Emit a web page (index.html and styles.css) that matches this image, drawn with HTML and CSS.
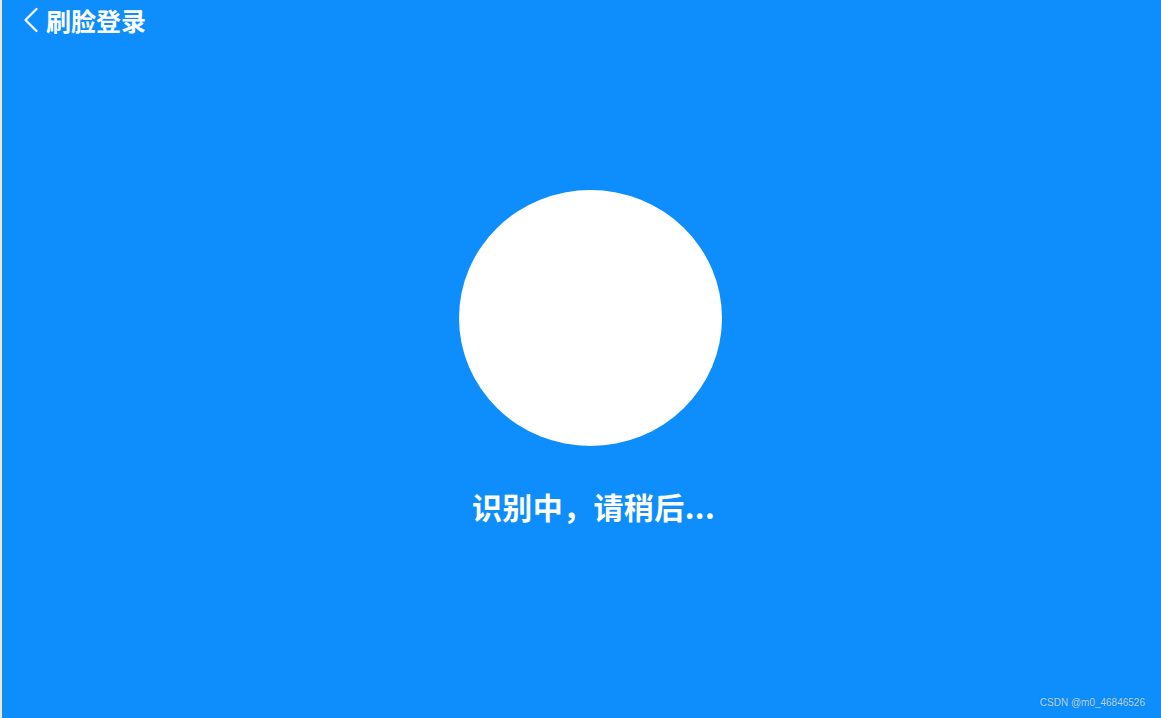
FILE: index.html
```html
<!DOCTYPE html>
<html lang="zh-CN">
<head>
<meta charset="utf-8">
<title>刷脸登录</title>
<link rel="stylesheet" href="styles.css">
</head>
<body>
<div class="page">
  <header class="header">
    <svg class="back" width="16" height="26" viewBox="0 0 16 26" aria-hidden="true">
      <polyline points="13.5,2 2.5,13 13.5,24" fill="none" stroke="#ffffff" stroke-width="2.2" stroke-linecap="round" stroke-linejoin="round"/>
    </svg>
    <h1 class="title">刷脸登录</h1>
  </header>
  <main class="main">
    <div class="face"></div>
    <p class="status">识别中，请稍后...</p>
  </main>
  <div class="watermark">CSDN @m0_46846526</div>
</div>
</body>
</html>
```
FILE: styles.css
```css
html, body {
  margin: 0;
  padding: 0;
  height: 100%;
}
body {
  background: #f3e6cc;
  font-family: "Noto Sans CJK SC", "Noto Sans", sans-serif;
  overflow: hidden;
}
.page {
  position: relative;
  margin-left: 2px;
  height: 718px;
  background: #0d8efc;
  display: flex;
  flex-direction: column;
}
.header {
  height: 40px;
  display: flex;
  align-items: center;
  padding-left: 21px;
  gap: 7px;
}
.back {
  display: block;
}
.title {
  margin: 0;
  color: #ffffff;
  font-size: 25px;
  font-weight: 700;
  line-height: 30px;
}
.main {
  display: flex;
  flex-direction: column;
  align-items: center;
  padding-top: 150px;
  padding-left: 18px;
}
.face {
  width: 263px;
  height: 256px;
  border-radius: 50%;
  background: #ffffff;
}
.status {
  margin: 40px 0 0;
  padding-left: 6px;
  color: #ffffff;
  font-size: 30px;
  font-weight: 700;
  line-height: 40px;
  letter-spacing: 0.4px;
}
.watermark {
  position: absolute;
  right: 16px;
  bottom: 10px;
  font-family: "Liberation Sans", Arial, sans-serif;
  font-size: 10px;
  color: rgba(255, 255, 255, 0.72);
  text-shadow: 0 0 1px rgba(0, 0, 0, 0.25);
}
```
